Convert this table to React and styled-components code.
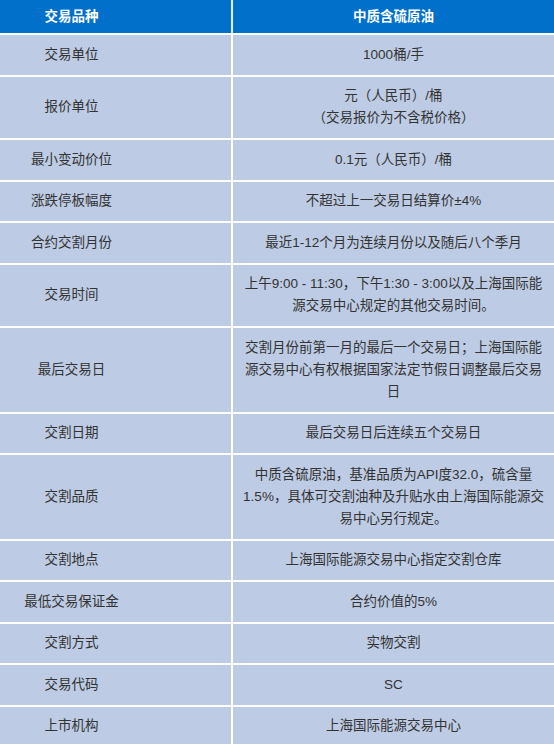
import styled, { createGlobalStyle } from 'styled-components';

const GlobalStyle = createGlobalStyle`
  body {
    margin: 0;
    background: #fff;
    font-family: "Liberation Sans", "Noto Sans CJK SC", sans-serif;
  }
`;

const Table = styled.table`
  width: 554px;
  table-layout: fixed;
  border-collapse: collapse;
  font-family: "Liberation Sans", "Noto Sans CJK SC", sans-serif;
  font-size: 13.5px;
  line-height: 22px;
  color: #333;
`;

const HeadCell = styled.th`
  background: #0070cb;
  color: #fff;
  font-weight: bold;
  padding: 6px 8px 5px;
  border-bottom: 2px solid #fff;
  text-align: center;
  ${(p) => (p.$label ? 'padding-right: 96px; border-right: 2px solid #e6eef8;' : '')}
`;

const Cell = styled.td`
  background: #bdcbe4;
  padding: 8.75px 8px;
  border-bottom: 2px solid #fff;
  text-align: center;
  vertical-align: middle;
  ${(p) => (p.$label ? 'padding-right: 96px; border-right: 2px solid #fff;' : '')}
`;

const rows = [
  ['交易单位', '1000桶/手'],
  ['报价单位', '元（人民币）/桶\n（交易报价为不含税价格）'],
  ['最小变动价位', '0.1元（人民币）/桶'],
  ['涨跌停板幅度', '不超过上一交易日结算价±4%'],
  ['合约交割月份', '最近1-12个月为连续月份以及随后八个季月'],
  ['交易时间', '上午9:00 - 11:30，下午1:30 - 3:00以及上海国际能源交易中心规定的其他交易时间。'],
  ['最后交易日', '交割月份前第一月的最后一个交易日；上海国际能源交易中心有权根据国家法定节假日调整最后交易日'],
  ['交割日期', '最后交易日后连续五个交易日'],
  ['交割品质', '中质含硫原油，基准品质为API度32.0，硫含量1.5%，具体可交割油种及升贴水由上海国际能源交易中心另行规定。'],
  ['交割地点', '上海国际能源交易中心指定交割仓库'],
  ['最低交易保证金', '合约价值的5%'],
  ['交割方式', '实物交割'],
  ['交易代码', 'SC'],
  ['上市机构', '上海国际能源交易中心'],
];

export default function App() {
  return (
    <>
      <GlobalStyle />
      <Table>
        <colgroup>
          <col style={{ width: 232 }} />
          <col />
        </colgroup>
        <thead>
          <tr>
            <HeadCell $label>交易品种</HeadCell>
            <HeadCell>中质含硫原油</HeadCell>
          </tr>
        </thead>
        <tbody>
          {rows.map(([label, value], i) => (
            <tr key={i}>
              <Cell $label>{label}</Cell>
              <Cell>
                {value.split('\n').map((line, j) => (
                  <div key={j}>{line}</div>
                ))}
              </Cell>
            </tr>
          ))}
        </tbody>
      </Table>
    </>
  );
}
